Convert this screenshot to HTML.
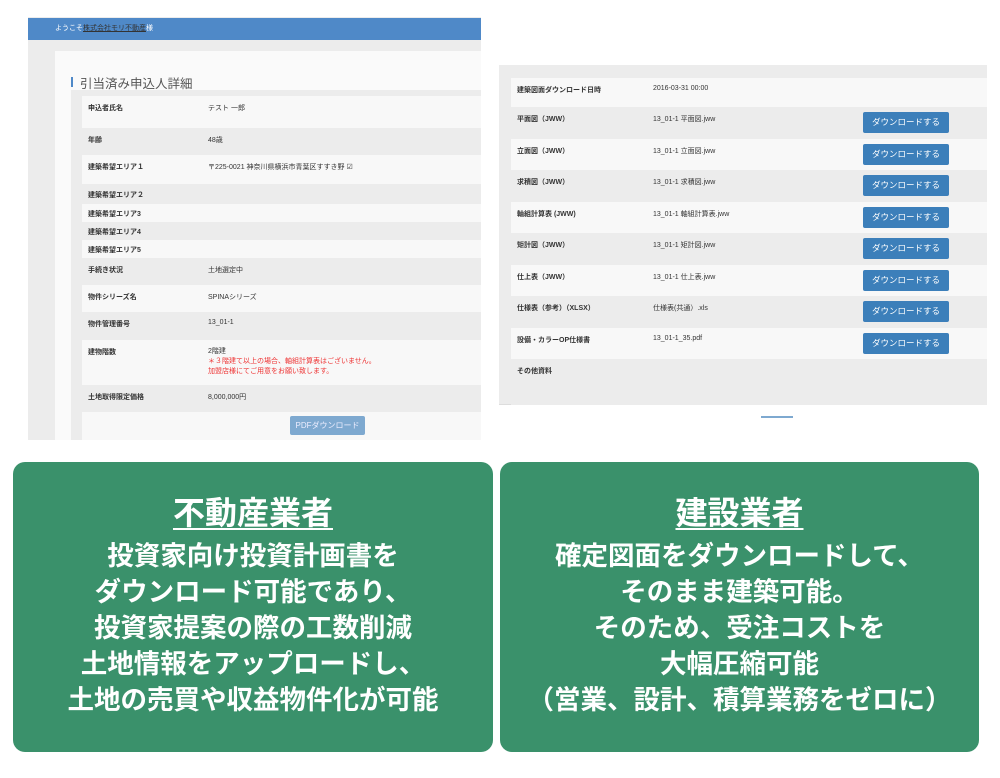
<!DOCTYPE html>
<html><head><meta charset="utf-8"><style>
*{margin:0;padding:0;box-sizing:border-box}
body{width:1000px;height:778px;background:#fff;position:relative;overflow:hidden;font-family:"Liberation Sans","Noto Sans CJK JP",sans-serif}
.abs{position:absolute}
.row{position:absolute;left:0;right:0;font-size:7px;color:#333}
.row b{position:absolute;left:6px;top:7px;font-weight:bold}
.row span{position:absolute;top:7px}
.card{position:absolute;top:462px;height:290px;background:#3a916b;border-radius:12px;color:#fff;text-align:center;font-weight:bold}
.card h2{margin-top:32px;font-size:32px;line-height:38px;text-decoration:underline;text-underline-offset:4px;text-decoration-thickness:2px}
.card p{font-size:26.5px;line-height:36px;margin-top:6px;white-space:nowrap}
.btn{position:absolute;left:352px;width:86px;height:21px;background:#3c7fba;border-radius:2px;color:#fff;font-size:8.5px;text-align:center;line-height:21px}
</style></head><body>
<div class="abs" style="left:28px;top:17px;width:453px;height:423px;background:#ececec">
 <div class="abs" style="left:0;top:1px;width:453px;height:22px;background:#4f89c8;color:#fff;font-size:7px;line-height:22px;padding-left:27px">ようこそ<u style="color:#333">株式会社モリ不動産</u>様</div>
 <div class="abs" style="left:27px;top:34px;width:426px;height:389px;background:#fafafa">
  <div class="abs" style="left:16px;top:26px;width:2px;height:10px;background:#4f89c8"></div>
  <div class="abs" style="left:25px;top:22px;font-size:12.5px;color:#555">引当済み申込人詳細</div>
  <div class="abs" style="left:16px;top:39px;width:410px;height:350px;background:#ececec">
   <div class="row" style="left:11px;top:6px;height:32px;background:#f8f8f8"><b>申込者氏名</b><span style="left:126px">テスト 一郎</span></div>
   <div class="row" style="left:11px;top:38px;height:27px;background:#ececec"><b>年齢</b><span style="left:126px">48歳</span></div>
   <div class="row" style="left:11px;top:65px;height:29px;background:#f8f8f8"><b>建築希望エリア１</b><span style="left:126px">〒225-0021 神奈川県横浜市青葉区すすき野 ☑</span></div>
   <div class="row" style="left:11px;top:94px;height:20px;background:#ececec"><b style="top:6px">建築希望エリア２</b></div>
   <div class="row" style="left:11px;top:114px;height:18px;background:#f8f8f8"><b style="top:5px">建築希望エリア3</b></div>
   <div class="row" style="left:11px;top:132px;height:18px;background:#ececec"><b style="top:5px">建築希望エリア4</b></div>
   <div class="row" style="left:11px;top:150px;height:18px;background:#f8f8f8"><b style="top:5px">建築希望エリア5</b></div>
   <div class="row" style="left:11px;top:168px;height:27px;background:#ececec"><b>手続き状況</b><span style="left:126px">土地選定中</span></div>
   <div class="row" style="left:11px;top:195px;height:27px;background:#f8f8f8"><b>物件シリーズ名</b><span style="left:126px">SPINAシリーズ</span></div>
   <div class="row" style="left:11px;top:222px;height:28px;background:#ececec"><b>物件管理番号</b><span style="left:126px">13_01-1</span></div>
   <div class="row" style="left:11px;top:250px;height:45px;background:#f8f8f8"><b>建物階数</b><span style="left:126px;line-height:10px">2階建<br><i style="font-style:normal;color:#e33">＊３階建て以上の場合、軸組計算表はございません。<br>加盟店様にてご用意をお願い致します。</i></span></div>
   <div class="row" style="left:11px;top:295px;height:27px;background:#ececec"><b>土地取得限定価格</b><span style="left:126px">8,000,000円</span></div>
   <div class="row" style="left:11px;top:322px;height:28px;background:#f8f8f8"><div class="abs" style="left:208px;top:4px;width:75px;height:19px;background:#7ea9d0;border-radius:2px;color:#eef;font-size:8px;text-align:center;line-height:19px">PDFダウンロード</div></div>
  </div>
 </div>
</div>
<div class="abs" style="left:499px;top:65px;width:488px;height:340px;background:#ececec;border-bottom:1px solid #ddd">
 <div class="abs" style="left:12px;top:13px;right:0;bottom:0">
  <div class="row" style="top:0;height:29px;background:#f8f8f8"><b>建築図面ダウンロード日時</b><span style="left:142px">2016-03-31 00:00</span></div>
  <div class="row" style="top:29px;height:32px;background:#ececec"><b>平面図（JWW）</b><span style="left:142px">13_01-1 平面図.jww</span><div class="btn" style="top:5px">ダウンロードする</div></div>
  <div class="row" style="top:61px;height:31px;background:#f8f8f8"><b>立面図（JWW）</b><span style="left:142px">13_01-1 立面図.jww</span><div class="btn" style="top:5px">ダウンロードする</div></div>
  <div class="row" style="top:92px;height:32px;background:#ececec"><b>求積図（JWW）</b><span style="left:142px">13_01-1 求積図.jww</span><div class="btn" style="top:5px">ダウンロードする</div></div>
  <div class="row" style="top:124px;height:31px;background:#f8f8f8"><b>軸組計算表 (JWW)</b><span style="left:142px">13_01-1 軸組計算表.jww</span><div class="btn" style="top:5px">ダウンロードする</div></div>
  <div class="row" style="top:155px;height:32px;background:#ececec"><b>矩計図（JWW）</b><span style="left:142px">13_01-1 矩計図.jww</span><div class="btn" style="top:5px">ダウンロードする</div></div>
  <div class="row" style="top:187px;height:31px;background:#f8f8f8"><b>仕上表（JWW）</b><span style="left:142px">13_01-1 仕上表.jww</span><div class="btn" style="top:5px">ダウンロードする</div></div>
  <div class="row" style="top:218px;height:32px;background:#ececec"><b>仕様表（参考）（XLSX）</b><span style="left:142px">仕様表(共通）.xls</span><div class="btn" style="top:5px">ダウンロードする</div></div>
  <div class="row" style="top:250px;height:31px;background:#f8f8f8"><b>設備・カラーOP仕様書</b><span style="left:142px">13_01-1_35.pdf</span><div class="btn" style="top:5px">ダウンロードする</div></div>
  <div class="row" style="top:281px;height:46px;background:#ececec"><b>その他資料</b></div>
 </div>
</div>
<div class="abs" style="left:761px;top:416px;width:32px;height:2px;background:#7ea9d0"></div>
<div class="card" style="left:13px;width:480px">
 <h2>不動産業者</h2>
 <p>投資家向け投資計画書を<br>ダウンロード可能であり、<br>投資家提案の際の工数削減<br>土地情報をアップロードし、<br>土地の売買や収益物件化が可能</p>
</div>
<div class="card" style="left:500px;width:479px">
 <h2>建設業者</h2>
 <p>確定図面をダウンロードして、<br>そのまま建築可能。<br>そのため、受注コストを<br>大幅圧縮可能<br>（営業、設計、積算業務をゼロに）</p>
</div>
</body></html>
